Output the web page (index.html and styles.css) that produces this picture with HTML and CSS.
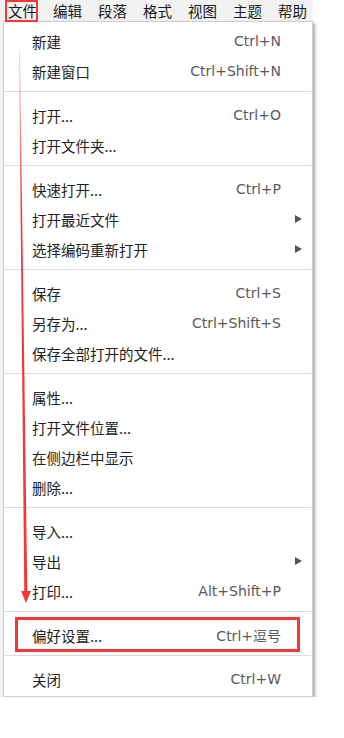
FILE: index.html
```html
<!DOCTYPE html>
<html lang="zh-CN">

<head>
  <meta charset="UTF-8" />
  <meta name="viewport" content="width=device-width, initial-scale=1.0" />
  <title>文件菜单</title>
  <link rel="stylesheet" href="styles.css">
</head>

<body>
  <section class="app">
    <nav class="menubar">
      <span>文件</span>
      <span>编辑</span>
      <span>段落</span>
      <span>格式</span>
      <span>视图</span>
      <span>主题</span>
      <span>帮助</span>
    </nav>

    <div class="menu">
      <div class="item"><span class="label">新建</span><span class="key">Ctrl+N</span><span class="sub"></span></div>
      <div class="item"><span class="label">新建窗口</span><span class="key">Ctrl+Shift+N</span><span class="sub"></span></div>
      <div class="sep"></div>
      <div class="item"><span class="label">打开...</span><span class="key">Ctrl+O</span><span class="sub"></span></div>
      <div class="item"><span class="label">打开文件夹...</span><span class="key"></span><span class="sub"></span></div>
      <div class="sep"></div>
      <div class="item"><span class="label">快速打开...</span><span class="key">Ctrl+P</span><span class="sub"></span></div>
      <div class="item"><span class="label">打开最近文件</span><span class="key"></span><span class="sub"><i class="arrow"></i></span></div>
      <div class="item"><span class="label">选择编码重新打开</span><span class="key"></span><span class="sub"><i class="arrow"></i></span></div>
      <div class="sep"></div>
      <div class="item"><span class="label">保存</span><span class="key">Ctrl+S</span><span class="sub"></span></div>
      <div class="item"><span class="label">另存为...</span><span class="key">Ctrl+Shift+S</span><span class="sub"></span></div>
      <div class="item"><span class="label">保存全部打开的文件...</span><span class="key"></span><span class="sub"></span></div>
      <div class="sep"></div>
      <div class="item"><span class="label">属性...</span><span class="key"></span><span class="sub"></span></div>
      <div class="item"><span class="label">打开文件位置...</span><span class="key"></span><span class="sub"></span></div>
      <div class="item"><span class="label">在侧边栏中显示</span><span class="key"></span><span class="sub"></span></div>
      <div class="item"><span class="label">删除...</span><span class="key"></span><span class="sub"></span></div>
      <div class="sep"></div>
      <div class="item"><span class="label">导入...</span><span class="key"></span><span class="sub"></span></div>
      <div class="item"><span class="label">导出</span><span class="key"></span><span class="sub"><i class="arrow"></i></span></div>
      <div class="item"><span class="label">打印...</span><span class="key">Alt+Shift+P</span><span class="sub"></span></div>
      <div class="sep"></div>
      <div class="item"><span class="label">偏好设置...</span><span class="key">Ctrl+逗号</span><span class="sub"></span></div>
      <div class="sep"></div>
      <div class="item"><span class="label">关闭</span><span class="key">Ctrl+W</span><span class="sub"></span></div>
    </div>
  </section>

  <!-- red annotation marks drawn over the menu -->
  <svg class="marks" width="344" height="738" viewBox="0 0 344 738">
    <defs>
      <linearGradient id="fade" x1="0" y1="0" x2="0" y2="1">
        <stop offset="0" stop-color="#f43838" stop-opacity="0.2" />
        <stop offset="0.3" stop-color="#f43838" stop-opacity="1" />
      </linearGradient>
    </defs>
    <rect x="6" y="1" width="31" height="20" fill="none" stroke="#f43838" stroke-width="2" />
    <polygon points="19,52 20,52 27.3,592 24.3,592" fill="url(#fade)" />
    <polygon points="21,591 31,591 26,603" fill="#f43838" />
    <rect x="16.5" y="618.5" width="282" height="32" fill="none" stroke="#f43838" stroke-width="3" />
  </svg>
</body>

</html>
```

FILE: styles.css
```css
body {
  margin: 0;
  background: #fff;
  font-family: "Noto Sans CJK SC", "Microsoft YaHei", sans-serif;
  color: #222;
}

.app {
  width: 313px;
  background: #f2f2f2;
}

.menubar {
  display: flex;
  align-items: center;
  gap: 16px;
  height: 21px;
  padding-left: 8px;
  font-size: 14.5px;
  color: #1a1a1a;
}

.menu {
  box-sizing: border-box;
  width: 310px;
  margin-left: 3px;
  padding: 4px 0 2px;
  background: #fff;
  border: 1px solid #cfcfcf;
  box-shadow: 2px 2px 3px rgba(0, 0, 0, 0.35);
  font-size: 14.5px;
}

.item {
  display: flex;
  align-items: center;
  height: 30px;
  padding: 0 10px 0 28px;
}

.label {
  flex: 1;
  color: #222;
}

/* shortcut text is set wider than the CJK face's latin */
.key {
  font-family: "DejaVu Sans", "Noto Sans CJK SC", sans-serif;
  font-size: 14px;
  color: #5a5a5a;
}

.sub {
  display: flex;
  justify-content: flex-end;
  width: 21px;
}

.arrow {
  width: 0;
  height: 0;
  border-left: 7px solid #555;
  border-top: 4.5px solid transparent;
  border-bottom: 4.5px solid transparent;
}

.sep {
  height: 1px;
  margin: 5px 1px 8px 0;
  background: #dcdcdc;
}

.marks {
  position: absolute;
  top: 0;
  left: 0;
  pointer-events: none;
}
```
